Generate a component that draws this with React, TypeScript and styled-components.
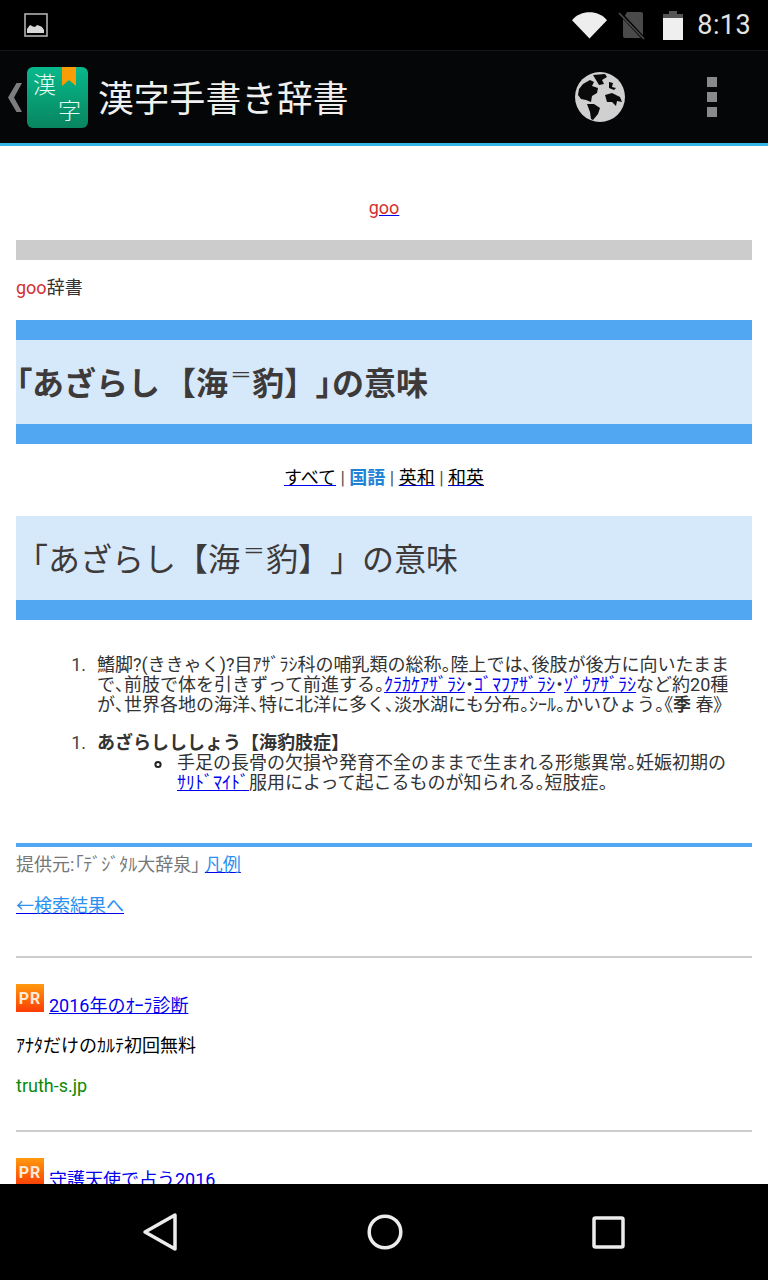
import React from "react";
import styled, { createGlobalStyle } from "styled-components";

const Global = createGlobalStyle`
  html, body { margin: 0; padding: 0; background: #000; }
  body { font-family: Roboto, "Noto Sans CJK JP", sans-serif; text-spacing-trim: space-all; }
`;

const Phone = styled.div`
  width: 768px; height: 1280px; display: flex; flex-direction: column; overflow: hidden; background: #fff;
`;
const StatusBar = styled.div`
  height: 50px; flex: none; background: #000; display: flex; align-items: center; padding: 0 17px 0 24px;
`;
const StatusRight = styled.div`
  margin-left: auto; display: flex; align-items: center;
`;
const Clock = styled.span`
  font: 400 27px/50px Roboto, sans-serif; color: #e4e4e4; margin-left: 14px; letter-spacing: 0.4px;
`;
const AppBar = styled.div`
  height: 92px; flex: none; background: #050607; border-top: 1px solid #161616; border-bottom: 3px solid #33b5e5;
  display: flex; align-items: center; padding-left: 8px;
`;
const Logo = styled.div`
  width: 61px; height: 61px; margin-left: 5px; border-radius: 6px; flex: none; position: relative; overflow: hidden;
  background: linear-gradient(#07b98c, #08855f);
`;
const Ribbon = styled.svg`
  position: absolute; left: 35px; top: 0;
`;
const LogoChar = styled.span<{ $x: number; $y: number }>`
  position: absolute; left: ${(p) => p.$x}px; top: ${(p) => p.$y}px; font: 300 23px/23px "Noto Sans CJK JP", sans-serif; color: #e6fbf3;
`;
const AppTitle = styled.div`
  margin: -2px 0 0 10px; font: 400 35.8px/40px "Noto Sans CJK JP", sans-serif; color: #f0f0f0; white-space: nowrap;
`;
const AppActions = styled.div`
  margin-left: auto; display: flex; align-items: center; gap: 81px; padding-right: 51px;
`;
const Dots = styled.div`
  display: flex; flex-direction: column; gap: 5px;
`;
const Dot = styled.div`
  width: 10px; height: 10px; background: #8a8a8a;
`;
const Page = styled.main`
  flex: 1; min-height: 0; overflow: hidden; background: #fff; padding: 52px 16px 0;
  font-size: 18px; line-height: 20px; color: #333; font-family: Roboto, "Noto Sans CJK JP", sans-serif;
`;
const Center = styled.div`
  text-align: center;
`;
const GooLink = styled.a`
  color: #d32f2f; text-decoration: underline; text-decoration-color: #00e;
`;
const GreyBar = styled.div`
  height: 20px; background: #ccc; margin-top: 22px;
`;
const Crumb = styled.div`
  margin-top: 18px;
`;
const Red = styled.span`
  color: #d32f2f;
`;
const Title = styled.h1`
  margin: 22px 0 0; height: 84px; box-sizing: content-box; background: #d6e9fb;
  border-top: 20px solid #52a7f2; border-bottom: 20px solid #52a7f2;
  font: 700 32px/88px Roboto, "Noto Sans CJK JP", sans-serif; color: #3e3a39;
  white-space: nowrap;
`;
const Narrow = styled.span`
  font-feature-settings: "palt";
`;
const Gap = styled.span`
  margin-left: 4px;
`;
const EqBox = styled.span<{ $w: number }>`
  display: inline-block; width: ${(p) => p.$w}px; text-align: center; line-height: 1;
`;
const Eq = styled.span`
  display: inline-block; font-weight: 400; transform: translate(1px, -0.3em) scale(1.25, 0.6);
`;
const Tabs = styled(Center)`
  margin-top: 24px; color: #555;
`;
const TabLink = styled.a`
  color: #000; text-decoration: underline; text-decoration-color: #00e;
`;
const TabCurrent = styled.b`
  color: #1f82d6;
`;
const SubTitle = styled.h2`
  margin: 28px 0 0; height: 84px; background: #d6e9fb; border-bottom: 20px solid #52a7f2; box-sizing: content-box;
  font: 400 32px/88px Roboto, "Noto Sans CJK JP", sans-serif; color: #3e3a39; white-space: nowrap;
`;
const Ol = styled.ol<{ $top: number }>`
  margin: ${(p) => p.$top}px 0 0; padding: 0 12px 0 81px;
  & > li::marker { content: "1.\u2002\u200A"; color: #444; }
`;
const Ul = styled.ul`
  margin: 0; padding-left: 80px;
  list-style-image: url("data:image/svg+xml,%3Csvg xmlns='http://www.w3.org/2000/svg' width='16' height='9'%3E%3Ccircle cx='4' cy='4.5' r='2.6' fill='none' stroke='%23222' stroke-width='2'/%3E%3C/svg%3E");
`;
const Punct = styled.span`
  font-feature-settings: "palt";
`;
const TextLink = styled.a`
  color: #00e; text-decoration: underline; white-space: nowrap;
`;
const Strong = styled.b`
  color: #333;
`;
const Rule = styled.div`
  height: 4px; background: #52a7f2; margin-top: 50px;
`;
const Credit = styled.div`
  color: #777; margin-top: 8px;
`;
const BlueLink = styled.a`
  color: #2b90f0; text-decoration: underline; text-decoration-color: #00e;
`;
const Back = styled.div`
  margin-top: 21px;
`;
const Hr = styled.div<{ $top: number }>`
  height: 2px; background: #ccc; margin-top: ${(p) => p.$top}px;
`;
const AdHead = styled.div`
  margin-top: 26px; display: flex; align-items: flex-start; gap: 5px; height: 32px;
`;
const AdLink = styled(TextLink)`
  margin-top: 12px;
`;
const PrBadge = styled.span`
  width: 28px; height: 28px; flex: none; background: linear-gradient(#ff9a0e, #fb3c05);
  color: #ffe9d6; font: 700 16px/29px Roboto, sans-serif; text-align: center; letter-spacing: 1px;
`;
const AdText = styled.div`
  margin-top: 20px; color: #000;
`;
const AdHost = styled.div`
  margin-top: 20px; color: #0a8a0a;
`;
const NavBar = styled.nav`
  height: 96px; flex: none; background: #000; display: flex; align-items: center; justify-content: space-between;
  padding: 0 143px 0 142px;
`;

const ImageIcon = () => (
  <svg width="24" height="24" viewBox="0 0 24 24">
    <rect x="1" y="1" width="22" height="22" fill="none" stroke="#b0b0b0" strokeWidth="1.6" />
    <path d="M3 20v-4l3-4 3 1.5 2 .5 2-2 3 1 2 1 2 3v3z" fill="#d8d8d8" />
  </svg>
);
const Wifi = () => (
  <svg width="35" height="28" viewBox="0 0 36 28" style={{ marginRight: 11 }}>
    <path d="M0 9C5 3.5 11 1 18 1s13 2.5 18 8L18 28z" fill="#eeeeee" />
  </svg>
);
const NoSim = () => (
  <svg width="28" height="30" viewBox="0 0 28 30" style={{ marginRight: 17 }}>
    <path d="M9 2h14a2 2 0 0 1 2 2v22a2 2 0 0 1-2 2H7a2 2 0 0 1-2-2V9z" fill="#4a4a4a" />
    <path d="M1 2l25 27" stroke="#000" strokeWidth="3.5" />
    <path d="M1 3l25 26" stroke="#4a4a4a" strokeWidth="1.8" />
  </svg>
);
const Battery = () => (
  <svg width="20" height="30" viewBox="0 0 20 30">
    <path d="M6 1h8v3h6v5H0V4h6z" fill="#555" />
    <rect x="0" y="8" width="20" height="22" fill="#efefef" />
  </svg>
);
const Chevron = () => (
  <svg width="14" height="29" viewBox="0 0 14 29" style={{ flex: "none" }}>
    <path d="M8.5 0h5.5L6 14.5 14 29H8.5L0 14.5z" fill="#7d7d7d" />
  </svg>
);
const Globe = () => (
  <svg width="52" height="52" viewBox="0 0 52 52">
    <circle cx="26" cy="26" r="25" fill="#d0d0d0" />
    <g fill="#0a0a0a">
      <path d="M9 13l7-4 4 2-2 4 6 2-1 5-5 3-1 6-5-2-5-1-3-4 1-6z" />
      <path d="M13 33h7l6 4-2 6-5 6-2-1-1-7z" />
      <path d="M19 4l12-1 2 3-5 3 2 4-5 1-3-5z" />
      <path d="M31 24l7-2 8 4 2 5-5-1-1 5-4-4-5 0z" />
      <path d="M35 11l4 1-1 4 4 1-2 2-5-2z" />
    </g>
  </svg>
);
const NavBack = () => (
  <svg width="36" height="40" viewBox="0 0 36 40">
    <path d="M33 3v34L3 20z" fill="none" stroke="#ececec" strokeWidth="3.5" strokeLinejoin="round" />
  </svg>
);
const NavHome = () => (
  <svg width="36" height="36" viewBox="0 0 36 36">
    <circle cx="18" cy="18" r="15.8" fill="none" stroke="#ececec" strokeWidth="3.5" />
  </svg>
);
const NavRecent = () => (
  <svg width="33" height="33" viewBox="0 0 33 33">
    <rect x="2" y="2" width="29" height="29" rx="1.5" fill="none" stroke="#ececec" strokeWidth="3.5" />
  </svg>
);

const EqMark = ({ w }: { w: number }) => (
  <EqBox $w={w}><Eq>=</Eq></EqBox>
);

export default function App() {
  return (
    <Phone>
      <Global />
      <StatusBar>
        <ImageIcon />
        <StatusRight>
          <Wifi />
          <NoSim />
          <Battery />
          <Clock>8:13</Clock>
        </StatusRight>
      </StatusBar>
      <AppBar>
        <Chevron />
        <Logo>
          <LogoChar $x={6} $y={5}>漢</LogoChar>
          <LogoChar $x={31} $y={31}>字</LogoChar>
          <Ribbon width="14" height="19" viewBox="0 0 14 19">
            <path d="M0 0h14v19l-7-6-7 6z" fill="#f99d07" />
          </Ribbon>
        </Logo>
        <AppTitle>漢字手書き辞書</AppTitle>
        <AppActions>
          <Globe />
          <Dots><Dot /><Dot /><Dot /></Dots>
        </AppActions>
      </AppBar>
      <Page>
        <Center><GooLink>goo</GooLink></Center>
        <GreyBar />
        <Crumb><Red>goo</Red>辞書</Crumb>
        <Title>
          <Narrow>「</Narrow>あざらし<Gap>【</Gap>海<EqMark w={24} />豹】<Narrow>」</Narrow>の意味
        </Title>
        <Tabs>
          <TabLink>すべて</TabLink> | <TabCurrent>国語</TabCurrent> | <TabLink>英和</TabLink> | <TabLink>和英</TabLink>
        </Tabs>
        <SubTitle>「あざらし【海<EqMark w={26} />豹】」の意味</SubTitle>
        <Ol $top={35}>
          <li>
            鰭脚?(ききゃく)?目ｱｻﾞﾗｼ科の哺乳類の総称<Punct>。</Punct>陸上では<Punct>、</Punct>後肢が後方に向いたままで<Punct>、</Punct>前肢で体を引きずって前進する<Punct>。</Punct>
            <TextLink>ｸﾗｶｹｱｻﾞﾗｼ</TextLink><Punct>・</Punct><TextLink>ｺﾞﾏﾌｱｻﾞﾗｼ</TextLink><Punct>・</Punct><TextLink>ｿﾞｳｱｻﾞﾗｼ</TextLink>
            など約20種が<Punct>、</Punct>世界各地の海洋<Punct>、</Punct>特に北洋に多く<Punct>、</Punct>淡水湖にも分布<Punct>。</Punct>ｼｰﾙ<Punct>。</Punct>かいひょう<Punct>。《</Punct><Strong>季</Strong> 春<Punct>》</Punct>
          </li>
        </Ol>
        <Ol $top={18}>
          <li>
            <Strong>あざらしししょう【海豹肢症】</Strong>
            <Ul>
              <li>
                手足の長骨の欠損や発育不全のままで生まれる形態異常<Punct>。</Punct>妊娠初期の
                <TextLink>ｻﾘﾄﾞﾏｲﾄﾞ</TextLink>服用によって起こるものが知られる<Punct>。</Punct>短肢症<Punct>。</Punct>
              </li>
            </Ul>
          </li>
        </Ol>
        <Rule />
        <Credit>提供元:<Narrow>「</Narrow>ﾃﾞｼﾞﾀﾙ大辞泉<Narrow>」</Narrow> <BlueLink>凡例</BlueLink></Credit>
        <Back><BlueLink>←検索結果へ</BlueLink></Back>
        <Hr $top={40} />
        <AdHead><PrBadge>PR</PrBadge><AdLink>2016年のｵｰﾗ診断</AdLink></AdHead>
        <AdText>ｱﾅﾀだけのｶﾙﾃ初回無料</AdText>
        <AdHost>truth-s.jp</AdHost>
        <Hr $top={34} />
        <AdHead><PrBadge>PR</PrBadge><AdLink>守護天使で占う2016</AdLink></AdHead>
      </Page>
      <NavBar>
        <NavBack />
        <NavHome />
        <NavRecent />
      </NavBar>
    </Phone>
  );
}
